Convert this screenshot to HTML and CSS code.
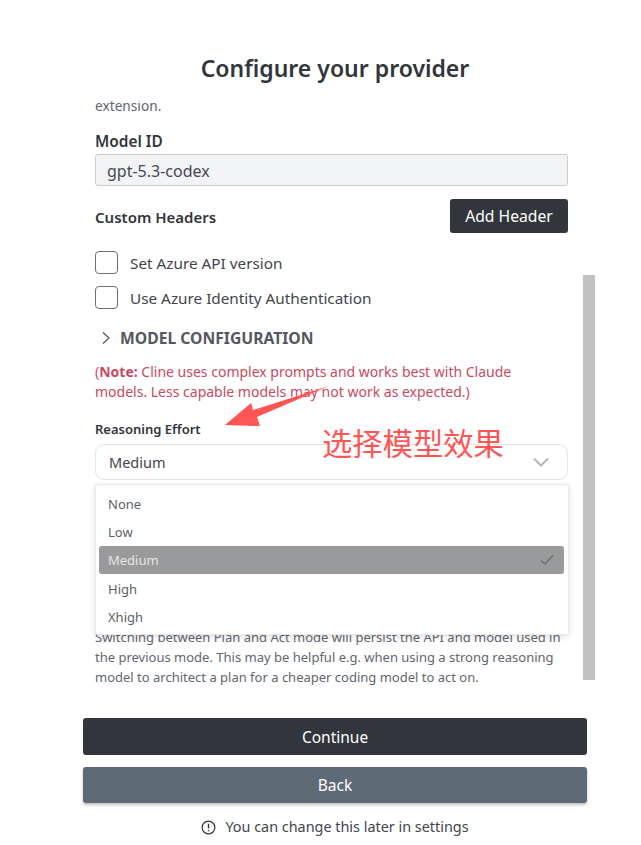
FILE: index.html
```html
<!DOCTYPE html>
<html lang="en">
<head>
<meta charset="utf-8">
<title>Configure your provider</title>
<link rel="stylesheet" href="styles.css">
</head>
<body>
<div class="page">
  <h1 class="title">Configure your provider</h1>
  <div class="pane">
    <div class="pane-inner">
      <p class="muted clipped">extension.</p>
      <label class="field-label model">Model ID</label>
      <div class="input">gpt-5.3-codex</div>
      <div class="headers-row">
        <span class="field-label flush">Custom Headers</span>
        <button class="btn-add">Add Header</button>
      </div>
      <div class="check-row"><span class="box"></span><span class="check-text">Set Azure API version</span></div>
      <div class="check-row second"><span class="box"></span><span class="check-text">Use Azure Identity Authentication</span></div>
      <div class="section-head">
        <svg class="chev" width="10" height="14" viewBox="0 0 10 14"><path d="M2 1.5 8 7 2 12.5" fill="none" stroke="#555" stroke-width="1.2"/></svg>
        <span>MODEL CONFIGURATION</span>
      </div>
      <p class="note">(<b>Note:</b> Cline uses complex prompts and works best with Claude models. Less capable models may not work as expected.)</p>
      <label class="small-label">Reasoning Effort</label>
      <div class="select-wrap">
        <div class="select">
          <span class="select-value">Medium</span>
          <svg width="16" height="10" viewBox="0 0 16 10"><path d="M1 1.5 8 8.5 15 1.5" fill="none" stroke="#b5b5b5" stroke-width="2"/></svg>
        </div>
        <ul class="menu">
          <li>None</li>
          <li>Low</li>
          <li class="active">Medium<svg width="14" height="12" viewBox="0 0 14 12"><path d="M1 6.5 5 10 13 1.5" fill="none" stroke="#6b6b6b" stroke-width="1.2"/></svg></li>
          <li>High</li>
          <li>Xhigh</li>
        </ul>
      </div>
      <p class="muted switch">Switching between Plan and Act mode will persist the API and model used in the previous mode. This may be helpful e.g. when using a strong reasoning model to architect a plan for a cheaper coding model to act on.</p>
    </div>
    <div class="scrollbar"></div>
  </div>
  <button class="btn primary">Continue</button>
  <button class="btn secondary">Back</button>
  <div class="tip">
    <svg width="15" height="15" viewBox="0 0 16 16"><circle cx="8" cy="8" r="6.8" fill="none" stroke="#32353b" stroke-width="1.3"/><path d="M8 4v5M8 10.6v1.5" stroke="#32353b" stroke-width="1.5"/></svg>
    <span>You can change this later in settings</span>
  </div>
</div>
<svg class="arrow" width="120" height="50" viewBox="0 0 120 50"><path d="M105 1 33 32 36 41 1 40 27 18 29 25Z" fill="#ff5555"/></svg>
<div class="annot">选择模型效果</div>
</body>
</html>
```
FILE: styles.css
```css
* { box-sizing: border-box; }
html, body { margin: 0; padding: 0; }
body {
  position: relative;
  width: 641px;
  height: 845px;
  overflow: hidden;
  background: #fff;
  font-family: "Noto Sans", "Open Sans", sans-serif;
  color: #32353b;
}
.page { width: 504px; margin-left: 83px; }
.title {
  margin: 0;
  height: 101px;
  padding-top: 50px;
  font-size: 23px;
  line-height: 36px;
  font-weight: 600;
  text-align: center;
}
.pane {
  position: relative;
  height: 589px;
  overflow: hidden;
  width: 512px;
  margin-bottom: 28px;
}
.pane-inner { margin-top: -5px; padding: 0 19px 0 12px; width: 504px; }
.muted { margin: 0; font-size: 13px; line-height: 20px; color: #5f6670; }
.clipped { margin-bottom: 16px; font-size: 13.7px; }
.field-label { display: block; font-size: 15px; line-height: 20px; font-weight: 600; margin-bottom: 2px; }
.field-label.model { font-size: 15.4px; }
.field-label.flush { margin: 0; padding-top: 1px; }
.input {
  height: 32px;
  background: #f2f3f5;
  border: 1px solid #ccc;
  border-radius: 3px;
  padding-left: 11px;
  font-size: 16px;
  line-height: 32px;
  color: #444a52;
}
.headers-row { display: flex; justify-content: space-between; align-items: center; margin-top: 13px; }
.btn-add {
  width: 118px;
  height: 34px;
  border: 0;
  border-radius: 3px;
  background: #32353b;
  color: #fff;
  font: 15.7px/34px "Noto Sans", sans-serif;
  padding: 0;
}
.check-row { display: flex; align-items: center; gap: 12px; height: 23px; margin-top: 18px; font-size: 15.3px; color: #3f454c; }
.check-row.second { margin-top: 12px; }
.check-text { padding-top: 1px; }
.box { width: 23px; height: 23px; border: 1px solid #6c7178; border-radius: 4px; background: #fff; }
.section-head {
  display: flex;
  align-items: center;
  gap: 9px;
  margin-top: 17px;
  padding-left: 6px;
  height: 24px;
  font-size: 15.7px;
  font-weight: 700;
  color: #55585e;
}
.note { margin: 12px 0 0; padding-right: 30px; font-size: 14px; line-height: 20px; color: #c84a5e; }
.note b { font-weight: 700; }
.small-label { display: block; margin-top: 17px; font-size: 13px; line-height: 20px; font-weight: 600; }
.select-wrap { position: relative; margin-top: 5px; }
.select {
  display: flex;
  justify-content: space-between;
  align-items: center;
  height: 36px;
  padding: 0 18px 0 13px;
  border: 1px solid #e3e3e3;
  border-radius: 9px;
  font-size: 14.5px;
  color: #3f454c;
}
.select-value { padding-top: 0; }
.menu {
  position: absolute;
  top: 40px;
  left: 0;
  right: -1px;
  z-index: 2;
  height: 151px;
  margin: 0;
  padding: 4px 4px 5px 3px;
  list-style: none;
  background: #fff;
  border: 1px solid #e8e8e8;
  border-radius: 3px;
  box-shadow: 0 2px 6px rgba(0, 0, 0, .12);
  font-size: 13px;
  color: #5a5f66;
}
.menu li {
  display: flex;
  justify-content: space-between;
  align-items: center;
  height: 28.3px;
  padding: 1px 10px 0 9px;
  border-radius: 3px;
}
.menu li.active { background: #999a9c; color: #e6e6e6; }
.switch { margin-top: 147px; }
.scrollbar { position: absolute; right: 0; top: 174px; width: 12px; height: 405px; background: #c1c1c1; }
.btn {
  display: block;
  width: 504px;
  border: 0;
  border-radius: 3px;
  color: #fff;
  padding: 0;
  font: 15.5px/36px "Noto Sans", sans-serif;
  text-align: center;
}
.primary { height: 37px; background: #32353b; margin-bottom: 12px; }
.secondary { height: 36px; background: #5f6a77; box-shadow: 0 2px 3px rgba(0, 0, 0, .25); }
.tip {
  display: flex;
  justify-content: center;
  align-items: center;
  gap: 9px;
  margin-top: 14px;
  font-size: 14.4px;
  line-height: 20px;
  color: #3f454c;
}
.arrow { position: absolute; left: 224px; top: 385px; }
.annot {
  position: absolute;
  left: 322px;
  top: 423px;
  font: 30.3px/38px "Noto Sans CJK SC", sans-serif;
  color: #ff5555;
}
```
